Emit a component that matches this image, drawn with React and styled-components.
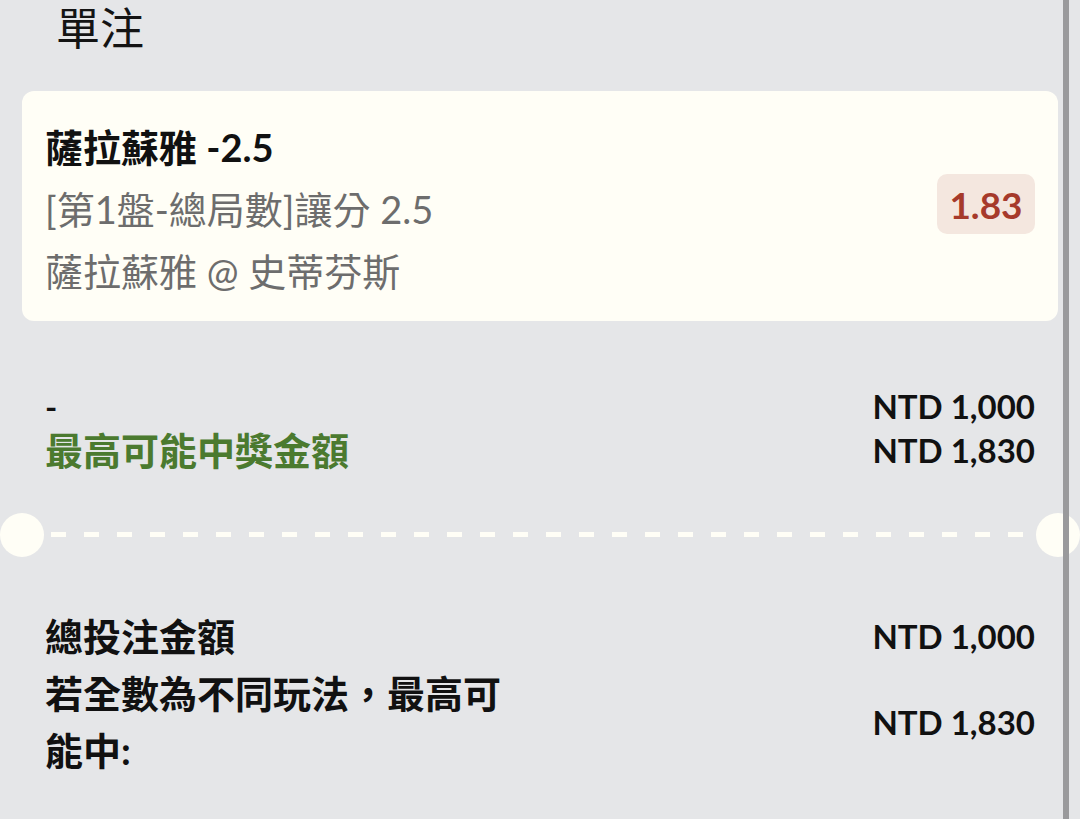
import React from "react";
import styled, { createGlobalStyle } from "styled-components";

const GlobalStyle = createGlobalStyle`
  html, body {
    margin: 0;
    padding: 0;
    background: #e5e6e8;
  }
  * { box-sizing: border-box; }
`;

const Page = styled.div`
  position: relative;
  width: 1080px;
  min-height: 819px;
  padding: 0 22px;
  background: #e5e6e8;
  font-family: "Lato", "Noto Sans CJK TC", sans-serif;
  color: #111;
  overflow: hidden;
`;

// the grey scrollbar on the right, drawn over the content
const ScrollBar = styled.div`
  position: absolute;
  top: 0;
  bottom: 0;
  right: 11px;
  width: 6px;
  background: #9a9a9c;
`;

const Title = styled.h1`
  margin: 0;
  height: 52px;
  padding: 0 0 0 34px;
  font-family: "Noto Sans CJK TC", sans-serif;
  font-size: 44px;
  line-height: 52px;
  font-weight: 400;
  color: #141414;
`;

const Card = styled.div`
  margin-top: 39px;
  display: flex;
  align-items: center;
  justify-content: space-between;
  padding: 25px 23px 19px 23px;
  background: #fffef6;
  border-radius: 12px;
`;

const Info = styled.div`
  display: flex;
  flex-direction: column;
`;

const InfoLine = styled.div`
  height: 62px;
  font-size: 38px;
  line-height: 62px;
  font-weight: ${(p) => (p.$bold ? 700 : 400)};
  color: ${(p) => (p.$muted ? "#6d6d6d" : "#111")};
  white-space: nowrap;
`;

const Odds = styled.div`
  display: flex;
  align-items: center;
  justify-content: center;
  width: 98px;
  height: 60px;
  margin-top: -10px;
  border-radius: 10px;
  background: #f4e7df;
  color: #a63a2b;
  font-family: "Lato", sans-serif;
  font-weight: 700;
  font-size: 37px;
`;

const Section = styled.div`
  margin-top: ${(p) => p.$top}px;
  padding: 0 23px;
  display: flex;
  flex-direction: column;
`;

const Row = styled.div`
  display: flex;
  align-items: center;
  justify-content: space-between;
  line-height: ${(p) => p.$lh}px;
`;

const Label = styled.div`
  max-width: 480px;
  font-size: 38px;
  font-weight: 700;
  color: ${(p) => p.$color || "#111"};
`;

const Amount = styled.div`
  font-family: "Lato", sans-serif;
  font-size: 33px;
  font-weight: 700;
  color: #111;
  white-space: nowrap;
`;

const Divider = styled.div`
  margin: 40px -22px 0;
  height: 45px;
  display: flex;
  align-items: center;
`;

const Notch = styled.div`
  flex: 0 0 44px;
  height: 44px;
  border-radius: 50%;
  background: #fffef6;
`;

const Dashes = styled.div`
  flex: 1;
  height: 5px;
  margin: 0 7px;
  background: repeating-linear-gradient(
    to right,
    #fffef6 0 15px,
    transparent 15px 33px
  );
`;

export default function App() {
  return (
    <>
      <GlobalStyle />
      <Page>
        <Title>單注</Title>

        <Card>
          <Info>
            <InfoLine $bold>薩拉蘇雅 -2.5</InfoLine>
            <InfoLine $muted>[第1盤-總局數]讓分 2.5</InfoLine>
            <InfoLine $muted>薩拉蘇雅 @ 史蒂芬斯</InfoLine>
          </Info>
          <Odds>1.83</Odds>
        </Card>

        <Section $top={63}>
          <Row $lh={44}>
            <Amount>-</Amount>
            <Amount>NTD 1,000</Amount>
          </Row>
          <Row $lh={44}>
            <Label $color="#4b7a2f">最高可能中獎金額</Label>
            <Amount>NTD 1,830</Amount>
          </Row>
        </Section>

        <Divider>
          <Notch />
          <Dashes />
          <Notch />
        </Divider>

        <Section $top={51}>
          <Row $lh={57}>
            <Label>總投注金額</Label>
            <Amount>NTD 1,000</Amount>
          </Row>
          <Row $lh={57}>
            <Label>若全數為不同玩法，最高可能中:</Label>
            <Amount>NTD 1,830</Amount>
          </Row>
        </Section>

        <ScrollBar />
      </Page>
    </>
  );
}
